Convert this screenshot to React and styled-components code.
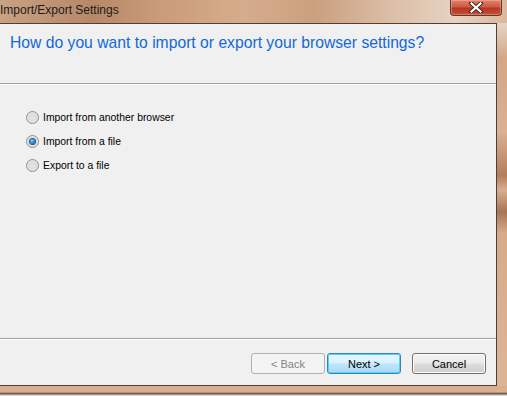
import React, { useState } from 'react'
import styled, { createGlobalStyle } from 'styled-components'

const GlobalStyle = createGlobalStyle`
  html, body { margin: 0; padding: 0; }
  body {
    width: 507px;
    height: 396px;
    overflow: hidden;
    font-family: "Liberation Sans", Arial, sans-serif;
  }
`

const Window = styled.div`
  width: 507px;
  height: 396px;
  display: flex;
  flex-direction: column;
  background:
    linear-gradient(90deg, #c9a283 0%, #b68868 18%, #c99c7a 32%, #d6ad8c 48%, #caa07f 62%, #dcc0a8 78%, #e6d3c3 90%, #d9b79c 100%);
`

const TitleBar = styled.div`
  height: 23px;
  display: flex;
  align-items: flex-start;
  justify-content: space-between;
  flex-shrink: 0;
`

const Title = styled.div`
  font-size: 12px;
  color: #1c1c1c;
  padding-top: 3px;
  line-height: 15px;
`

const CloseButton = styled.div`
  width: 50px;
  height: 15px;
  margin-right: 5px;
  border: 1px solid #5b3a2e;
  border-top: none;
  border-radius: 0 0 4px 4px;
  background: linear-gradient(180deg, #e0836d 0%, #cf5a43 45%, #b8361f 55%, #c9503a 100%);
  box-shadow: inset 0 0 0 1px rgba(255, 210, 190, 0.35);
  display: flex;
  align-items: center;
  justify-content: center;
`

const Body = styled.div`
  flex: 1;
  display: flex;
  flex-direction: column;
`

const FrameRow = styled.div`
  flex: 1;
  display: flex;
`

const Panel = styled.div`
  width: 497px;
  display: flex;
  flex-direction: column;
  background: #f0f0f0;
  border: 1px solid #4e4038;
  border-left: none;
  box-sizing: border-box;
`

const RightFrame = styled.div`
  flex: 1;
  background: linear-gradient(180deg, #e6d4c6 0%, #d3a686 10%, #d9b194 30%, #b57e5c 42%, #d8ae8f 46%, #a87556 52%, #d6ab8b 58%, #dcb597 100%);
`

const BottomFrame = styled.div`
  height: 10px;
  background: linear-gradient(180deg, #d9ad8c 0%, #dbb193 60%, #6f5b50 75%, #f2f2f2 100%);
`

const Header = styled.div`
  height: 59px;
  padding: 9px 0 0 10px;
  box-sizing: border-box;
`

const Instruction = styled.h1`
  margin: 0;
  font-weight: normal;
  font-size: 15.7px;
  line-height: 20px;
  color: #1468d6;
`

const Separator = styled.div`
  height: 1px;
  background: #a0a0a0;
  border-bottom: 1px solid #ffffff;
`

const Content = styled.div`
  flex: 1;
  padding: 26px 0 0 26px;
  display: flex;
  flex-direction: column;
  gap: 11px;
`

const Option = styled.label`
  display: flex;
  align-items: center;
  gap: 4px;
  font-size: 10.4px;
  color: #000;
  height: 13px;
  cursor: default;
`

const RadioCircle = styled.span`
  width: 13px;
  height: 13px;
  box-sizing: border-box;
  border-radius: 50%;
  border: 1px solid #8d8d8d;
  background: radial-gradient(circle at 50% 50%, #e6e6e6 0%, #dcdcdc 45%, #f4f4f4 100%);
  display: flex;
  align-items: center;
  justify-content: center;
  flex-shrink: 0;

  &::after {
    content: "";
    width: 5px;
    height: 5px;
    border-radius: 50%;
    display: ${p => (p.$checked ? 'block' : 'none')};
    background: radial-gradient(circle at 40% 35%, #8fd3ff 0%, #1a7fc4 55%, #0a4f85 100%);
    box-shadow: 0 0 0 1px #1b5e8e;
  }
`

const Footer = styled.div`
  height: 45px;
  padding: 13px 10px 0 0;
  box-sizing: border-box;
  display: flex;
  justify-content: flex-end;
  align-items: flex-start;
`

const Button = styled.button`
  width: 74px;
  height: 21px;
  margin-left: ${p => p.$gap || 0}px;
  font-family: "Liberation Sans", Arial, sans-serif;
  font-size: 11px;
  padding: 0;
  border-radius: 3px;
  border: 1px solid ${p => (p.$variant === 'default' ? '#3c7fb1' : p.$variant === 'disabled' ? '#adb2b5' : '#707070')};
  color: ${p => (p.$variant === 'disabled' ? '#838383' : '#000')};
  background: ${p =>
    p.$variant === 'default'
      ? 'linear-gradient(180deg, #eaf6fd 0%, #d9f0fc 48%, #bee6fd 52%, #a7d9f5 100%)'
      : p.$variant === 'disabled'
        ? '#f4f4f4'
        : 'linear-gradient(180deg, #f2f2f2 0%, #ebebeb 48%, #dddddd 52%, #cfcfcf 100%)'};
  box-shadow: ${p => (p.$variant === 'default' ? 'inset 0 0 0 1px #48d8fb' : p.$variant === 'disabled' ? 'none' : 'inset 0 0 0 1px #fcfcfc')};
`

const options = ['Import from another browser', 'Import from a file', 'Export to a file']

export default function App() {
  const [selected, setSelected] = useState(1)

  return (
    <Window>
      <GlobalStyle />
      <TitleBar>
        <Title>Import/Export Settings</Title>
        <CloseButton>
          <svg width="14" height="11" viewBox="0 0 14 11">
            <path d="M2 1 L12 10 M12 1 L2 10" stroke="#3b2a2a" strokeWidth="4" strokeLinecap="square" />
            <path d="M2.5 1.5 L11.5 9.5 M11.5 1.5 L2.5 9.5" stroke="#ffffff" strokeWidth="2.2" strokeLinecap="square" />
          </svg>
        </CloseButton>
      </TitleBar>
      <Body>
        <FrameRow>
          <Panel>
            <Header>
              <Instruction>How do you want to import or export your browser settings?</Instruction>
            </Header>
            <Separator />
            <Content>
              {options.map((text, i) => (
                <Option key={text} onClick={() => setSelected(i)}>
                  <RadioCircle $checked={selected === i} />
                  {text}
                </Option>
              ))}
            </Content>
            <Separator />
            <Footer>
              <Button $variant="disabled">&lt; Back</Button>
              <Button $variant="default" $gap={2}>Next &gt;</Button>
              <Button $gap={11}>Cancel</Button>
            </Footer>
          </Panel>
          <RightFrame />
        </FrameRow>
        <BottomFrame />
      </Body>
    </Window>
  )
}
